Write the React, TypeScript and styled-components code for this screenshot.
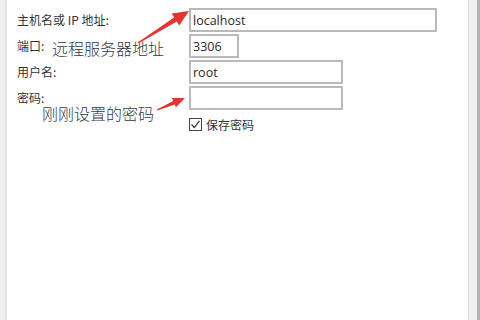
import styled, { createGlobalStyle } from 'styled-components';

const GlobalStyle = createGlobalStyle`
  html, body {
    margin: 0;
    padding: 0;
    background: #f0f0f0;
  }
`;

const Frame = styled.div`
  display: flex;
  flex-direction: row;
  width: 480px;
  height: 320px;
  overflow: hidden;
  background: #f0f0f0;
`;

const Panel = styled.div`
  position: relative;
  flex: 1;
  margin-left: 5px;
  background: #ffffff;
  border-left: 2px solid #e2e2e2;
  border-right: 1px solid #dadada;
`;

const Gutter = styled.div`
  width: 8px;
  background: #f0f0f0;
  border-right: 3px solid #b2b2b2;
`;

const Form = styled.div`
  display: grid;
  grid-template-columns: 172px 1fr;
  grid-auto-rows: 24px;
  row-gap: 2px;
  padding: 8px 0 0 10px;
  align-items: center;
`;

const Label = styled.label`
  font-family: "Noto Sans CJK SC", "Noto Sans", sans-serif;
  font-size: 12px;
  color: #333;
  line-height: 14px;
`;

const Field = styled.div<{ $w: number }>`
  box-sizing: border-box;
  width: ${(p) => p.$w}px;
  height: 24px;
  border: 2px solid #b9b9b9;
  padding-left: 2px;
  display: flex;
  align-items: center;
  font-family: "Open Sans", "Noto Sans", sans-serif;
  font-size: 12.5px;
  color: #2a2a2a;
`;

const CheckRow = styled.div`
  grid-column: 2;
  display: flex;
  align-items: center;
  gap: 4px;
  margin-top: 4px;
  align-self: start;
  font-family: "Noto Sans CJK SC", "Noto Sans", sans-serif;
  font-size: 12px;
  color: #333;
`;

const Box = styled.span`
  box-sizing: border-box;
  width: 13px;
  height: 13px;
  border: 1px solid #444;
  display: flex;
  align-items: center;
  justify-content: center;
`;

const Note = styled.div<{ $x: number; $y: number }>`
  position: absolute;
  left: ${(p) => p.$x}px;
  top: ${(p) => p.$y}px;
  font-family: "Noto Sans CJK SC", sans-serif;
  font-size: 16px;
  line-height: 18px;
  font-weight: 300;
  color: #353a45;
  white-space: nowrap;
`;

const Arrows = styled.svg`
  position: absolute;
  left: -7px;
  top: 0;
  pointer-events: none;
`;

const App = () => {
  return (
    <Frame>
      <GlobalStyle />
      <Panel>
        <Form>
          <Label>主机名或 IP 地址:</Label>
          <Field $w={248}>localhost</Field>
          <Label>端口:</Label>
          <Field $w={50}>3306</Field>
          <Label>用户名:</Label>
          <Field $w={154}>root</Field>
          <Label>密码:</Label>
          <Field $w={154} />
          <CheckRow>
            <Box>
              <svg width="11" height="11" viewBox="0 0 11 11">
                <path d="M1.5 5.5 L4.3 8.5 L9.5 1.8" fill="none" stroke="#333" strokeWidth="1.2" />
              </svg>
            </Box>
            保存密码
          </CheckRow>
        </Form>
        <Note $x={45} $y={39}>远程服务器地址</Note>
        <Note $x={35} $y={104}>刚刚设置的密码</Note>
        <Arrows width="480" height="320" viewBox="0 0 480 320">
          <polygon
            points="137.7,42.6 174.1,17.4 171.7,13.6 189,11 179.2,25.4 176.8,21.6 138.3,43.4"
            fill="#e5332e"
          />
          <polygon
            points="156.8,109.5 173.2,100.9 172,98.1 185,98 175.9,107.3 174.8,104.6 157.2,110.5"
            fill="#e5332e"
          />
        </Arrows>
      </Panel>
      <Gutter />
    </Frame>
  );
};

export default App;
